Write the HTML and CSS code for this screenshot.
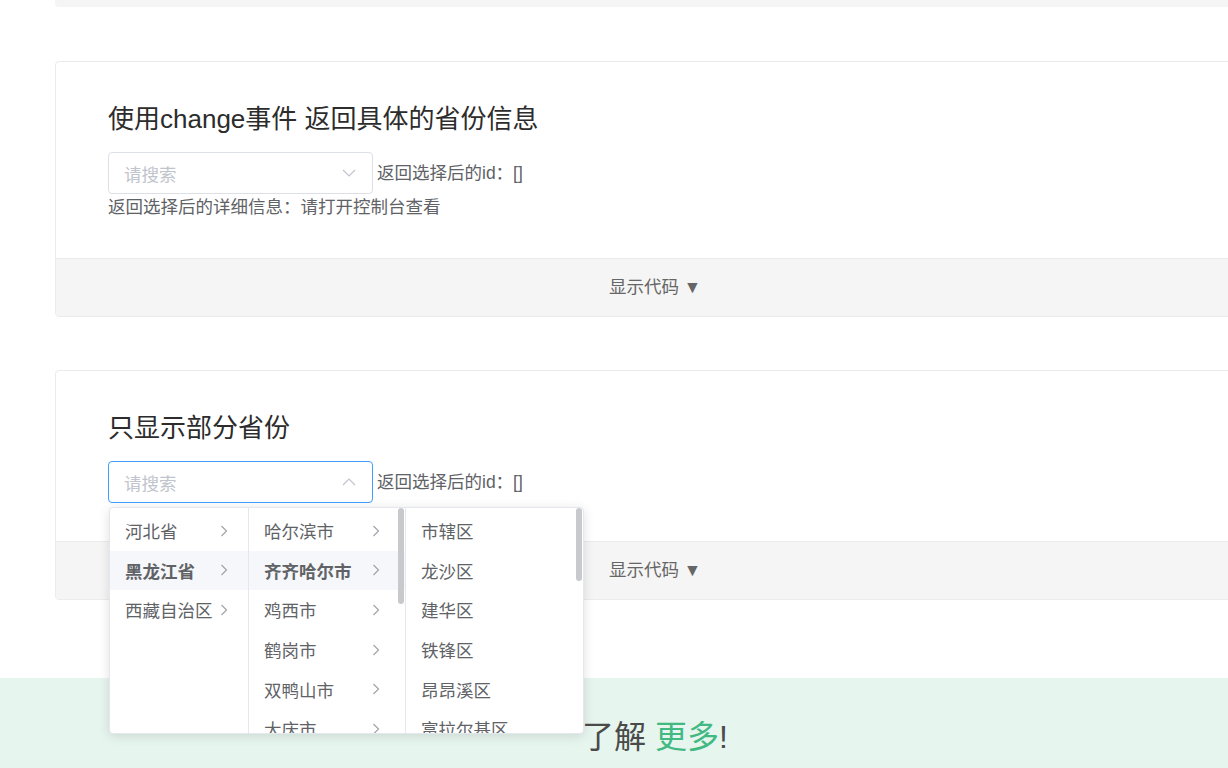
FILE: index.html
```html
<!DOCTYPE html>
<html lang="zh-CN">
<head>
<meta charset="utf-8">
<title>省份选择</title>
<link rel="stylesheet" href="styles.css">
</head>
<body>
<div class="page">
  <div class="prev-tail"></div>

  <section class="demo">
    <div class="demo-body">
      <h3 class="demo-title">使用change事件 返回具体的省份信息</h3>
      <div class="row">
        <div class="select">
          <span class="placeholder">请搜索</span>
          <svg class="chev" width="14" height="8" viewBox="0 0 14 8"><path d="M1 1 L7 7 L13 1" fill="none" stroke="#c0c4cc" stroke-width="1.2"/></svg>
        </div>
        <span class="label">返回选择后的id：[]</span>
      </div>
      <p class="line">返回选择后的详细信息：请打开控制台查看</p>
    </div>
    <div class="demo-foot">显示代码 ▼</div>
  </section>

  <section class="demo">
    <div class="demo-body">
      <h3 class="demo-title">只显示部分省份</h3>
      <div class="row">
        <div class="select focused">
          <span class="placeholder">请搜索</span>
          <svg class="chev" width="14" height="8" viewBox="0 0 14 8"><path d="M1 7 L7 1 L13 7" fill="none" stroke="#c0c4cc" stroke-width="1.2"/></svg>
          <div class="dropdown">
            <ul class="col col1">
              <li class="node">河北省<svg class="arr" width="8" height="12" viewBox="0 0 8 12"><path d="M1.5 1 L6.5 6 L1.5 11" fill="none" stroke="#a0a3a8" stroke-width="1.2"/></svg></li>
              <li class="node active">黑龙江省<svg class="arr" width="8" height="12" viewBox="0 0 8 12"><path d="M1.5 1 L6.5 6 L1.5 11" fill="none" stroke="#a0a3a8" stroke-width="1.2"/></svg></li>
              <li class="node">西藏自治区<svg class="arr" width="8" height="12" viewBox="0 0 8 12"><path d="M1.5 1 L6.5 6 L1.5 11" fill="none" stroke="#a0a3a8" stroke-width="1.2"/></svg></li>
            </ul>
            <ul class="col col2">
              <li class="node">哈尔滨市<svg class="arr" width="8" height="12" viewBox="0 0 8 12"><path d="M1.5 1 L6.5 6 L1.5 11" fill="none" stroke="#a0a3a8" stroke-width="1.2"/></svg></li>
              <li class="node active">齐齐哈尔市<svg class="arr" width="8" height="12" viewBox="0 0 8 12"><path d="M1.5 1 L6.5 6 L1.5 11" fill="none" stroke="#a0a3a8" stroke-width="1.2"/></svg></li>
              <li class="node">鸡西市<svg class="arr" width="8" height="12" viewBox="0 0 8 12"><path d="M1.5 1 L6.5 6 L1.5 11" fill="none" stroke="#a0a3a8" stroke-width="1.2"/></svg></li>
              <li class="node">鹤岗市<svg class="arr" width="8" height="12" viewBox="0 0 8 12"><path d="M1.5 1 L6.5 6 L1.5 11" fill="none" stroke="#a0a3a8" stroke-width="1.2"/></svg></li>
              <li class="node">双鸭山市<svg class="arr" width="8" height="12" viewBox="0 0 8 12"><path d="M1.5 1 L6.5 6 L1.5 11" fill="none" stroke="#a0a3a8" stroke-width="1.2"/></svg></li>
              <li class="node">大庆市<svg class="arr" width="8" height="12" viewBox="0 0 8 12"><path d="M1.5 1 L6.5 6 L1.5 11" fill="none" stroke="#a0a3a8" stroke-width="1.2"/></svg></li>
              <span class="thumb thumb2"></span>
            </ul>
            <ul class="col col3">
              <li class="node">市辖区</li>
              <li class="node">龙沙区</li>
              <li class="node">建华区</li>
              <li class="node">铁锋区</li>
              <li class="node">昂昂溪区</li>
              <li class="node">富拉尔基区</li>
              <span class="thumb thumb3"></span>
            </ul>
          </div>
        </div>
        <span class="label">返回选择后的id：[]</span>
      </div>
    </div>
    <div class="demo-foot">显示代码 ▼</div>
  </section>

  <div class="more">了解 <span class="green">更多</span>!</div>
</div>
</body>
</html>
```

FILE: styles.css
```css
html, body {
  margin: 0;
  padding: 0;
  overflow: hidden;
  background: #fff;
  width: 1228px;
  height: 768px;
}

body {
  font-family: "Liberation Sans", "Noto Sans CJK SC", sans-serif;
  color: #606266;
}

.page {
  width: 1200px;
  margin-left: 55px;
}

.prev-tail {
  height: 7px;
  background: #f5f5f5;
  border-radius: 0 0 4px 4px;
  margin-bottom: 54px;
}

.demo {
  border: 1px solid #ebebeb;
  border-radius: 4px;
  margin-bottom: 53px;
}

.demo-body {
  padding: 40px 52px 38px;
}

.demo-title {
  margin: 0 0 16px;
  font-size: 26px;
  line-height: 34px;
  font-weight: normal;
  color: #2c2c2c;
}

.row {
  display: flex;
  align-items: center;
  gap: 4px;
  height: 42px;
}

.select {
  position: relative;
  box-sizing: border-box;
  width: 265px;
  height: 42px;
  border: 1px solid #dcdfe6;
  border-radius: 4px;
  display: flex;
  align-items: center;
  justify-content: space-between;
  padding: 0 15px 0 15px;
  background: #fff;
}

.select.focused {
  border-color: #409eff;
}

.placeholder {
  font-size: 17.5px;
  color: #c0c4cc;
}

.chev {
  display: block;
  margin-right: 1px;
}

.label {
  font-size: 17.5px;
  color: #606266;
  line-height: 26px;
}

.line {
  margin: 0;
  font-size: 17.5px;
  line-height: 26px;
  color: #606266;
}

.demo-foot {
  border-top: 1px solid #ebebeb;
  background: #f5f5f5;
  height: 57px;
  line-height: 57px;
  text-align: center;
  font-size: 17.5px;
  color: #666;
  border-radius: 0 0 4px 4px;
}

.more {
  background: #e6f5ee;
  margin-left: -55px;
  padding-left: 55px;
  width: 1228px;
  box-sizing: border-box;
  height: 100px;
  padding-top: 37px;
  font-size: 32px;
  line-height: 44px;
  color: #4a4a4a;
  text-align: center;
  margin-top: 78px;
}

.more {
  width: 1255px;
}

.green {
  color: #42b983;
}

/* dropdown */
.dropdown {
  position: absolute;
  top: 45px;
  left: 0;
  z-index: 10;
  display: flex;
  height: 225px;
  background: #fff;
  border: 1px solid #e4e7ed;
  border-radius: 4px;
  box-shadow: 0 2px 12px 0 rgba(0, 0, 0, 0.12);
  overflow: hidden;
}

.col {
  position: relative;
  list-style: none;
  margin: 0;
  padding: 3px 0 0;
  box-sizing: border-box;
  height: 100%;
  overflow: hidden;
}

.col1 {
  width: 139px;
  border-right: 1px solid #e4e7ed;
}

.col2 {
  width: 157px;
  border-right: 1px solid #e4e7ed;
}

.col3 {
  width: 177px;
}

.node {
  display: flex;
  align-items: center;
  justify-content: space-between;
  height: 39.6px;
  padding: 0 20px 0 15px;
  font-size: 17.5px;
  color: #606266;
  white-space: nowrap;
}

.col2 .node {
  padding-right: 25px;
}

.node.active {
  background: #f5f7fa;
  font-weight: bold;
}

.arr {
  display: block;
  flex: none;
}

.thumb {
  position: absolute;
  top: 0;
  right: 1px;
  width: 6px;
  border-radius: 3px;
  background: #c8c9cc;
}

.thumb2 {
  height: 96px;
}

.thumb3 {
  height: 73px;
}
```
